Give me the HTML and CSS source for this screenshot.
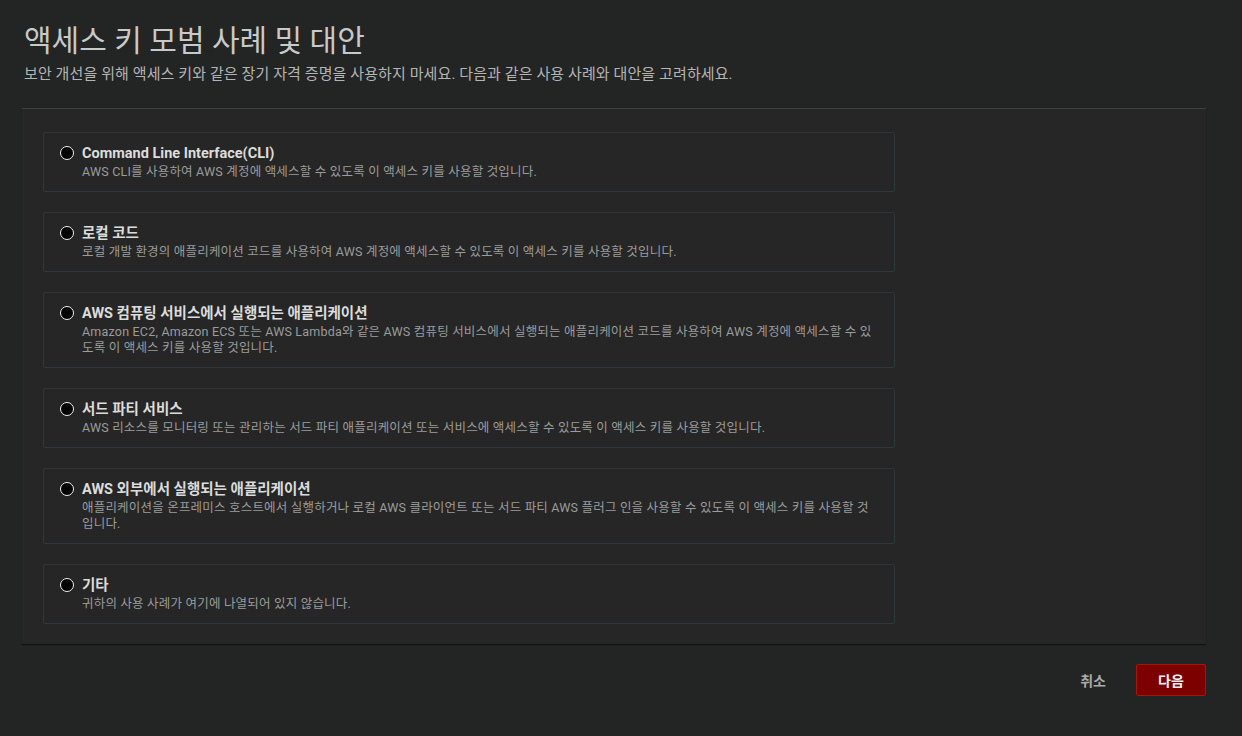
FILE: index.html
```html
<!DOCTYPE html>
<html lang="ko">

<head>
    <meta charset="UTF-8">
    <meta name="viewport" content="width=device-width, initial-scale=1.0">
    <title>액세스 키 모범 사례 및 대안</title>
    <link rel="stylesheet" href="styles.css">
</head>

<body>
    <div class="page">
        <div class="header">
            <h1>액세스 키 모범 사례 및 대안</h1>
            <p class="subtitle">보안 개선을 위해 액세스 키와 같은 장기 자격 증명을 사용하지 마세요. 다음과 같은 사용 사례와 대안을 고려하세요.</p>
        </div>

        <div class="panel">
            <label class="option">
                <span class="radio"></span>
                <span class="option-text">
                    <span class="option-title">Command Line Interface(CLI)</span>
                    <span class="option-desc">AWS CLI를 사용하여 AWS 계정에 액세스할 수 있도록 이 액세스 키를 사용할 것입니다.</span>
                </span>
            </label>
            <label class="option">
                <span class="radio"></span>
                <span class="option-text">
                    <span class="option-title">로컬 코드</span>
                    <span class="option-desc">로컬 개발 환경의 애플리케이션 코드를 사용하여 AWS 계정에 액세스할 수 있도록 이 액세스 키를 사용할 것입니다.</span>
                </span>
            </label>
            <label class="option">
                <span class="radio"></span>
                <span class="option-text">
                    <span class="option-title">AWS 컴퓨팅 서비스에서 실행되는 애플리케이션</span>
                    <span class="option-desc">Amazon EC2, Amazon ECS 또는 AWS Lambda와 같은 AWS 컴퓨팅 서비스에서 실행되는 애플리케이션 코드를 사용하여 AWS 계정에 액세스할 수 있도록 이 액세스 키를 사용할 것입니다.</span>
                </span>
            </label>
            <label class="option">
                <span class="radio"></span>
                <span class="option-text">
                    <span class="option-title">서드 파티 서비스</span>
                    <span class="option-desc">AWS 리소스를 모니터링 또는 관리하는 서드 파티 애플리케이션 또는 서비스에 액세스할 수 있도록 이 액세스 키를 사용할 것입니다.</span>
                </span>
            </label>
            <label class="option">
                <span class="radio"></span>
                <span class="option-text">
                    <span class="option-title">AWS 외부에서 실행되는 애플리케이션</span>
                    <span class="option-desc">애플리케이션을 온프레미스 호스트에서 실행하거나 로컬 AWS 클라이언트 또는 서드 파티 AWS 플러그 인을 사용할 수 있도록 이 액세스 키를 사용할 것입니다.</span>
                </span>
            </label>
            <label class="option">
                <span class="radio"></span>
                <span class="option-text">
                    <span class="option-title">기타</span>
                    <span class="option-desc">귀하의 사용 사례가 여기에 나열되어 있지 않습니다.</span>
                </span>
            </label>
        </div>

        <div class="actions">
            <button class="btn-cancel">취소</button>
            <button class="btn-next">다음</button>
        </div>
    </div>
</body>

</html>
```

FILE: styles.css
```css
body {
    margin: 0;
    background-color: #232424;
    font-family: Roboto, "Noto Sans CJK KR", sans-serif;
    color: #d5d5d5;
}

.page {
    padding: 22px 36px 0 22px;
}

.header {
    padding: 0 2px;
}

h1 {
    margin: 0;
    font-size: 30px;
    font-weight: 400;
    line-height: 38px;
    color: #c8c9c9;
}

.subtitle {
    margin: 4px 0 0;
    font-size: 15px;
    letter-spacing: 0.1px;
    line-height: 20px;
    color: #b3b4b4;
}

.panel {
    margin-top: 24px;
    background-color: #262626;
    border-top: 1px solid #3d4040;
    box-shadow: 0 1px 1px rgba(0, 0, 0, 0.5);
    padding: 23px 20px 20px 21px;
    display: flex;
    flex-direction: column;
    gap: 20px;
}

.option {
    display: flex;
    align-items: flex-start;
    gap: 8px;
    border: 1px solid #2e3838;
    border-radius: 2px;
    padding: 11px 18px 11px 16px;
    box-sizing: border-box;
    width: 852px;
    cursor: pointer;
}

.radio {
    flex: none;
    width: 14px;
    height: 14px;
    margin-top: 2px;
    box-sizing: border-box;
    border: 1.5px solid #f2f2f2;
    border-radius: 50%;
    background-color: #000;
}

.option-text {
    display: flex;
    flex-direction: column;
}

.option-title {
    font-size: 14.5px;
    font-weight: 700;
    line-height: 20px;
    color: #dcdcdc;
}

.option-desc {
    font-size: 12.5px;
    letter-spacing: 0.2px;
    line-height: 16px;
    color: #9b9c9c;
}

.actions {
    display: flex;
    justify-content: flex-end;
    align-items: center;
    gap: 12px;
    margin-top: 20px;
}

.actions button {
    font-family: Roboto, "Noto Sans CJK KR", sans-serif;
    font-size: 14px;
    font-weight: 700;
    height: 32px;
    border-radius: 2px;
    cursor: pointer;
}

.btn-cancel {
    background: none;
    border: none;
    color: #a9aaaa;
    padding: 0 18px;
}

.btn-next {
    width: 70px;
    background-color: #7c0000;
    border: 1px solid #a51800;
    color: #f0f0f0;
}
```
